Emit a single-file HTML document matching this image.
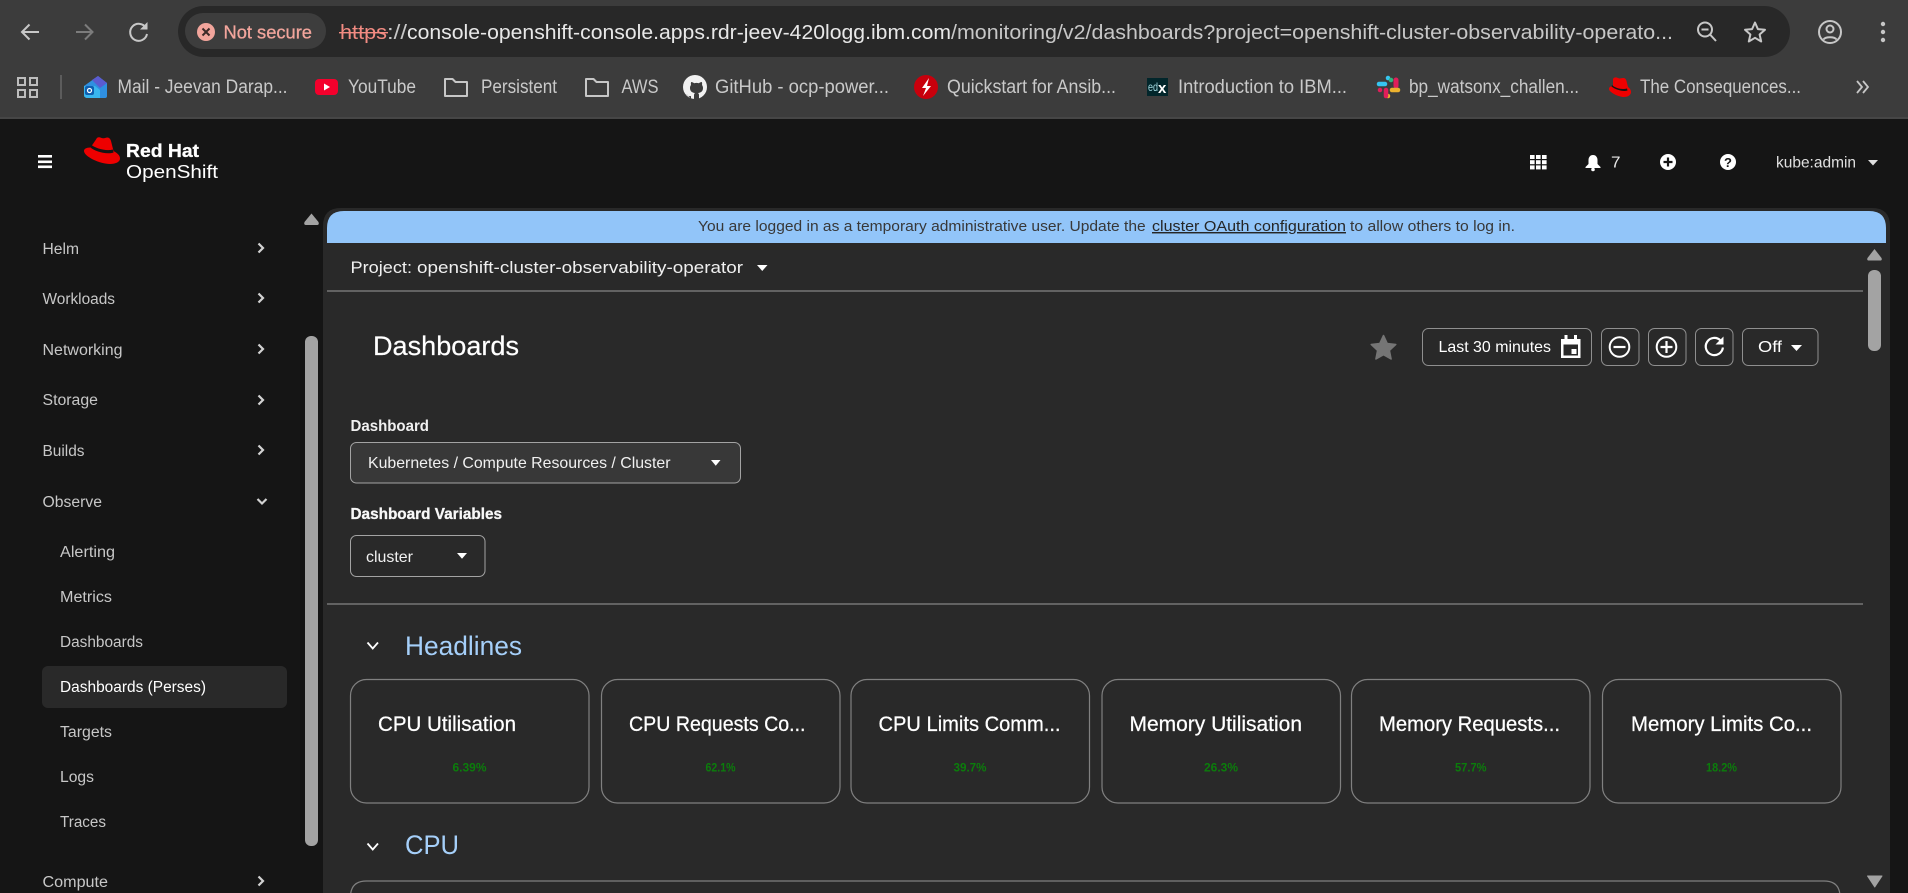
<!DOCTYPE html>
<html lang="en">
<head>
<meta charset="utf-8">
<title>Dashboards · Red Hat OpenShift</title>
<style>
html,body{margin:0;padding:0;width:1908px;height:893px;overflow:hidden;background:#151515}
svg{display:block;position:absolute;left:0;top:0}
text{font-family:"Liberation Sans",sans-serif;white-space:pre}
.bm{font-size:19px;fill:#c9c9c9}
.nav{font-size:15.500px;fill:#c7c7c7}
.ct{font-size:21px;fill:#fff;stroke:#fff;stroke-width:.25}
.cv{font-size:12px;font-weight:bold;fill:#0b7d0b;text-anchor:start}
.sec{font-size:27px;fill:#a5cff9}
.btn{fill:#292929;stroke:#8f8f8f;stroke-width:1}
.card{fill:#292929;stroke:#808080;stroke-width:1.200}
.chev{fill:none;stroke:#d2d2d2;stroke-width:2.200}
.caret{fill:#fff}
</style>
</head>
<body>
<svg width="1908" height="893" viewBox="0 0 1908 893" xmlns="http://www.w3.org/2000/svg">
  <!-- browser chrome -->
  <rect width="1908" height="118" fill="#3c3c3c"/>
  <rect y="117" width="1908" height="2" fill="#464646"/>
  <rect x="0" y="119" width="1908" height="774" fill="#151515"/>

  <path d="M39 32H22M29.500 24.500 22 32l7.500 7.500" fill="none" stroke="#c7c7c7" stroke-width="2"/>
  <path d="M76 32H92M85 24.500 92.500 32 85 39.500" fill="none" stroke="#7c7c7c" stroke-width="2"/>
  <path d="M146 28a8.500 8.500 0 1 0 1 6" fill="none" stroke="#c7c7c7" stroke-width="2"/>
  <path d="M147.500 22v7.500H140z" fill="#c7c7c7"/>

  <rect x="178" y="6" width="1612" height="51" rx="25.500" fill="#282828"/>
  <rect x="185" y="13" width="141" height="36" rx="18" fill="#3d3d3d"/>
  <circle cx="206" cy="32" r="9" fill="#f2a59c"/>
  <path d="M202.500 28.500 209.500 35.500M209.500 28.500 202.500 35.500" stroke="#3d2a28" stroke-width="2"/>
  <text x="223.500" y="38.500" font-size="18.500" fill="#f2a59c" stroke="#f2a59c" stroke-width=".3" textLength="88.500" lengthAdjust="spacingAndGlyphs">Not secure</text>

  <text x="340" y="39" font-size="20.500" fill="#f28b82" textLength="47" lengthAdjust="spacingAndGlyphs">https</text>
  <rect x="339" y="32" width="49" height="1.400" fill="#f28b82"/>
  <text x="387" y="39" font-size="20.500" fill="#c7c7c7" textLength="20" lengthAdjust="spacingAndGlyphs">://</text>
  <text x="407" y="39" font-size="20.500" fill="#e8e8e8" textLength="544" lengthAdjust="spacingAndGlyphs">console-openshift-console.apps.rdr-jeev-420logg.ibm.com</text>
  <text x="951" y="39" font-size="20.500" fill="#c7c7c7" textLength="722" lengthAdjust="spacingAndGlyphs">/monitoring/v2/dashboards?project=openshift-cluster-observability-operato...</text>

  <circle cx="1705" cy="29.500" r="7" fill="none" stroke="#c7c7c7" stroke-width="2"/>
  <path d="M1710 34.500 1716 41M1701.500 29.500h7" stroke="#c7c7c7" stroke-width="2" fill="none"/>
  <path d="M1755 22.500l2.900 6.600 7.100.7-5.400 4.700 1.600 7-6.200-3.700-6.200 3.700 1.600-7-5.400-4.700 7.100-.7z" fill="none" stroke="#c7c7c7" stroke-width="2" stroke-linejoin="round"/>
  <circle cx="1830" cy="32" r="11" fill="none" stroke="#c7c7c7" stroke-width="2"/>
  <circle cx="1830" cy="29" r="3.500" fill="none" stroke="#c7c7c7" stroke-width="2"/>
  <path d="M1823.500 39.500c2-3 11-3 13 0" fill="none" stroke="#c7c7c7" stroke-width="2"/>
  <circle cx="1883" cy="24" r="2.200" fill="#c7c7c7"/><circle cx="1883" cy="32" r="2.200" fill="#c7c7c7"/><circle cx="1883" cy="40" r="2.200" fill="#c7c7c7"/>

  <!-- bookmarks -->
  <g fill="none" stroke="#bdbdbd" stroke-width="2">
    <rect x="18" y="78" width="7" height="7"/><rect x="30" y="78" width="7" height="7"/>
    <rect x="18" y="90" width="7" height="7"/><rect x="30" y="90" width="7" height="7"/>
  </g>
  <rect x="60" y="75" width="2" height="24" fill="#5c5c5c"/>

  <path d="M84 86 98 76l9 7v13q0 2-2 2H88q-4 0-4-3z" fill="#2f8fe0"/>
  <path d="M92 80 98 76l9 7-7 5z" fill="#5b5bd0"/>
  <path d="M84 86 95 86 100 90v8H88q-4 0-4-3z" fill="#39b6ee"/>
  <rect x="85" y="86" width="9" height="9" rx="2" fill="#0e5fb0"/><circle cx="89.500" cy="90.500" r="2" fill="none" stroke="#fff" stroke-width="1.200"/>
  <text x="117.500" y="93" class="bm" textLength="170" lengthAdjust="spacingAndGlyphs">Mail - Jeevan Darap...</text>

  <rect x="315" y="79" width="23" height="16" rx="4" fill="#f4002c"/><path d="M324 83.500v7l6-3.500z" fill="#fff"/>
  <text x="348" y="93" class="bm" textLength="68" lengthAdjust="spacingAndGlyphs">YouTube</text>

  <path d="M445 79h7.500l3 3H467v14h-22z" fill="none" stroke="#c7c7c7" stroke-width="2" stroke-linejoin="round"/>
  <text x="481" y="93" class="bm" textLength="76" lengthAdjust="spacingAndGlyphs">Persistent</text>
  <path d="M586 79h7.500l3 3H608v14h-22z" fill="none" stroke="#c7c7c7" stroke-width="2" stroke-linejoin="round"/>
  <text x="621.500" y="93" class="bm" textLength="37" lengthAdjust="spacingAndGlyphs">AWS</text>

  <circle cx="695" cy="87" r="12" fill="#f2f2f2"/>
  <path d="M691 99v-3c-3 .6-4-1-4.500-2M699 99v-4c0-1-.5-1.500-1-2 3-.3 5-1.800 5-5 0-1.200-.4-2.200-1-3 .2-1 .2-2-.2-3-1 0-2 .5-3 1.200a9 9 0 0 0-4.600 0c-1-.7-2-1.200-3-1.200-.4 1-.4 2-.2 3-.7.800-1 1.800-1 3 0 3.200 2 4.700 5 5-.5.500-1 1-1 2v4z" fill="#3c3c3c"/>
  <text x="715" y="93" class="bm" textLength="174" lengthAdjust="spacingAndGlyphs">GitHub - ocp-power...</text>

  <circle cx="926" cy="87" r="12" fill="#c8000c"/><path d="M929 78l-7 10h4l-3 8 8-10h-4z" fill="#fff"/>
  <text x="947" y="93" class="bm" textLength="169" lengthAdjust="spacingAndGlyphs">Quickstart for Ansib...</text>

  <rect x="1147" y="78" width="21" height="18" fill="#02262b"/>
  <text x="1148" y="91" font-size="12" fill="#a0d8e0" textLength="10" lengthAdjust="spacingAndGlyphs">ed</text>
  <text x="1158" y="93" font-size="15" font-weight="bold" fill="#fff">x</text>
  <text x="1178" y="93" class="bm" textLength="169" lengthAdjust="spacingAndGlyphs">Introduction to IBM...</text>

  <g stroke-width="4.500" stroke-linecap="round" fill="none">
    <path d="M1379 84h6" stroke="#36c5f0"/><path d="M1388 78h0" stroke="#36c5f0"/>
    <path d="M1396 80v6" stroke="#e01e5a" stroke-width="5"/><path d="M1391 80h0" stroke="#2eb67d"/>
    <path d="M1392 90h6" stroke="#ecb22e"/><path d="M1388 96h0" stroke="#ecb22e"/>
    <path d="M1386 90v6" stroke="#e01e5a"/><path d="M1380 90h0" stroke="#e01e5a"/>
  </g>
  <text x="1409" y="93" class="bm" textLength="170" lengthAdjust="spacingAndGlyphs">bp_watsonx_challen...</text>

  <path d="M1613 79c1-2 3-2 5-1 2 1 3 0 5 0 2 0 3 1 3.500 3l1.500 6c2 1.500 3 3 3 5 0 3-3 5-7 5-6 0-15-5-15-8 0-2 2-3 4-3z" fill="#e00"/>
  <path d="M1612 85c3 3 10 5 15 3.500l.5 2c-5 1.500-12-1-16-4z" fill="#151515"/>
  <text x="1640" y="93" class="bm" textLength="161" lengthAdjust="spacingAndGlyphs">The Consequences...</text>
  <path d="M1857 81l5 6-5 6M1863 81l5 6-5 6" fill="none" stroke="#c7c7c7" stroke-width="1.800"/>

  <!-- masthead -->
  <rect x="38" y="155" width="14" height="2.600" fill="#fff"/><rect x="38" y="160.500" width="14" height="2.600" fill="#fff"/><rect x="38" y="165.500" width="14" height="2.600" fill="#fff"/>
  <path d="M96 139.500C97 137 99 136.800 101 137.800 103 138.800 105 138 107 137.500 109 137.300 110.500 139 111 141L113.500 151C117 153 120 155 120 158.500 120 162 115.500 164 110 164 100 164 84 156.500 84 151 84 149 86 147.500 90.500 147.500Z" fill="#e00"/>
  <path d="M91.500 145C95 148 106 151.500 112.800 149.500L113.600 152.500C106 155 94 151 90.500 147.500Z" fill="#151515"/>
  <text x="126" y="157" font-size="18" font-weight="bold" fill="#fff" stroke="#fff" stroke-width=".3" textLength="73" lengthAdjust="spacingAndGlyphs">Red Hat</text>
  <text x="126" y="178" font-size="18.500" fill="#fff" textLength="92" lengthAdjust="spacingAndGlyphs">OpenShift</text>

  <g fill="#fff">
    <rect x="1530" y="155" width="4.600" height="4"/><rect x="1536" y="155" width="4.600" height="4"/><rect x="1542" y="155" width="4.600" height="4"/>
    <rect x="1530" y="160.200" width="4.600" height="4"/><rect x="1536" y="160.200" width="4.600" height="4"/><rect x="1542" y="160.200" width="4.600" height="4"/>
    <rect x="1530" y="165.400" width="4.600" height="4"/><rect x="1536" y="165.400" width="4.600" height="4"/><rect x="1542" y="165.400" width="4.600" height="4"/>
  </g>
  <path d="M1593 155c-3 0-4.500 2.500-4.500 5v4l-3 3v1h15v-1l-3-3v-4c0-2.500-1.500-5-4.500-5z" fill="#fff"/><circle cx="1593" cy="169.500" r="1.800" fill="#fff"/>
  <text x="1611" y="167.500" font-size="15.500" fill="#e6e6e6" textLength="9.500" lengthAdjust="spacingAndGlyphs">7</text>
  <circle cx="1668" cy="162" r="8" fill="#fff"/><path d="M1668 157.500v9M1663.500 162h9" stroke="#151515" stroke-width="2.200"/>
  <circle cx="1728" cy="162" r="8" fill="#fff"/>
  <text x="1728" y="167" font-size="13" font-weight="bold" fill="#151515" text-anchor="middle">?</text>
  <text x="1776" y="167.500" font-size="16" fill="#e0e0e0" textLength="80" lengthAdjust="spacingAndGlyphs">kube:admin</text>
  <path d="M1868 160h10l-5 5.500z" fill="#e0e0e0"/>

  <!-- sidebar -->
  <path d="M311.500 213.500 304.500 222q-1 3 1.500 3h11q2.500 0 1.500-3z" fill="#a3a3a3"/>
  <rect x="305" y="336" width="13" height="510" rx="6" fill="#a3a3a3"/>
  <rect x="42" y="666" width="245" height="42" rx="6" fill="#292929"/>

  <text x="42.500" y="254" class="nav" textLength="36.500" lengthAdjust="spacingAndGlyphs">Helm</text>
  <text x="42.500" y="304" class="nav" textLength="72.500" lengthAdjust="spacingAndGlyphs">Workloads</text>
  <text x="42.500" y="355" class="nav" textLength="80" lengthAdjust="spacingAndGlyphs">Networking</text>
  <text x="42.500" y="405" class="nav" textLength="55.500" lengthAdjust="spacingAndGlyphs">Storage</text>
  <text x="42.500" y="456" class="nav" textLength="42" lengthAdjust="spacingAndGlyphs">Builds</text>
  <text x="42.500" y="507" class="nav" textLength="59.500" lengthAdjust="spacingAndGlyphs">Observe</text>
  <text x="60" y="557" class="nav" textLength="55" lengthAdjust="spacingAndGlyphs">Alerting</text>
  <text x="60" y="602" class="nav" textLength="52" lengthAdjust="spacingAndGlyphs">Metrics</text>
  <text x="60" y="647" class="nav" textLength="83" lengthAdjust="spacingAndGlyphs">Dashboards</text>
  <text x="60" y="692" class="nav" style="fill:#fff" textLength="146" lengthAdjust="spacingAndGlyphs">Dashboards (Perses)</text>
  <text x="60" y="737" class="nav" textLength="52" lengthAdjust="spacingAndGlyphs">Targets</text>
  <text x="60" y="782" class="nav" textLength="34" lengthAdjust="spacingAndGlyphs">Logs</text>
  <text x="60" y="827" class="nav" textLength="46" lengthAdjust="spacingAndGlyphs">Traces</text>
  <text x="42.500" y="887" class="nav" textLength="65.500" lengthAdjust="spacingAndGlyphs">Compute</text>

  <g class="chev">
    <path d="M258.500 243.500 263 248l-4.500 4.500"/>
    <path d="M258.500 293.500 263 298l-4.500 4.500"/>
    <path d="M258.500 344.500 263 349l-4.500 4.500"/>
    <path d="M258.500 395.500 263 400l-4.500 4.500"/>
    <path d="M258.500 445.500 263 450l-4.500 4.500"/>
    <path d="M257.500 499 262 503.500l4.500-4.500"/>
    <path d="M258.500 876.500 263 881l-4.500 4.500"/>
  </g>

  <!-- main panel -->
  <path d="M323 893V226q0-18 18-18H1872q18 0 18 18V893z" fill="#292929"/>
  <path d="M327 243V228q0-17 17-17H1869q17 0 17 17V243z" fill="#92c5f9"/>
  <text x="698" y="231" font-size="14.500" fill="#383838" textLength="452" lengthAdjust="spacingAndGlyphs">You are logged in as a temporary administrative user. Update the </text>
  <text x="1152" y="231" font-size="14.500" fill="#262626" text-decoration="underline" textLength="194" lengthAdjust="spacingAndGlyphs">cluster OAuth configuration</text>
  <text x="1350" y="231" font-size="14.500" fill="#383838" textLength="165" lengthAdjust="spacingAndGlyphs">to allow others to log in.</text>

  <text x="350.500" y="273" font-size="17" fill="#f0f0f0" textLength="61.500" lengthAdjust="spacingAndGlyphs">Project:</text>
  <text x="417" y="273" font-size="17" fill="#f0f0f0" textLength="326" lengthAdjust="spacingAndGlyphs">openshift-cluster-observability-operator</text>
  <path d="M757 265h10.500l-5.250 6z" class="caret"/>
  <rect x="327" y="290.500" width="1536" height="1" fill="#9a9a9a"/>

  <text x="373" y="355" font-size="27" fill="#fff" stroke="#fff" stroke-width=".2" textLength="146" lengthAdjust="spacingAndGlyphs">Dashboards</text>

  <path d="M1383.500 335.500l3.700 8 8.600 1-6.400 5.900 1.700 8.600-7.600-4.300-7.600 4.300 1.700-8.600-6.400-5.900 8.600-1z" fill="#757575" stroke="#757575" stroke-width="1.500" stroke-linejoin="round"/>

  <rect x="1422.500" y="328.500" width="169" height="37" rx="6" class="btn"/>
  <text x="1438.500" y="352" font-size="16" fill="#fff" textLength="112.500" lengthAdjust="spacingAndGlyphs">Last 30 minutes</text>
  <path d="M1561 339h19.500v19H1561z" fill="#fff"/>
  <rect x="1563.500" y="344.500" width="14.500" height="11" fill="#292929"/>
  <rect x="1571.500" y="349" width="5" height="5" fill="#fff"/>
  <rect x="1564.500" y="335" width="3" height="5" fill="#fff"/><rect x="1574" y="335" width="3" height="5" fill="#fff"/>

  <rect x="1601.500" y="328.500" width="37.500" height="37" rx="6" class="btn"/>
  <circle cx="1619.500" cy="347" r="9.800" fill="none" stroke="#fff" stroke-width="2"/><path d="M1613.500 347h12" stroke="#fff" stroke-width="2.200"/>
  <rect x="1648.500" y="328.500" width="37.500" height="37" rx="6" class="btn"/>
  <circle cx="1666.500" cy="347" r="9.800" fill="none" stroke="#fff" stroke-width="2"/><path d="M1660.500 347h12M1666.500 341v12" stroke="#fff" stroke-width="2.200"/>
  <rect x="1695.500" y="328.500" width="37.500" height="37" rx="6" class="btn"/>
  <path d="M1720.500 340.500a8.600 8.600 0 1 0 2.400 7" fill="none" stroke="#fff" stroke-width="2.200"/><path d="M1723.500 336.500v8h-8z" fill="#fff"/>
  <rect x="1742.500" y="328.500" width="75.500" height="37" rx="6" class="btn"/>
  <text x="1758" y="352" font-size="16" fill="#fff" textLength="24" lengthAdjust="spacingAndGlyphs">Off</text>
  <path d="M1791 345h11l-5.500 6z" class="caret"/>

  <text x="350.500" y="431" font-size="15.500" font-weight="bold" fill="#f0f0f0" textLength="78.500" lengthAdjust="spacingAndGlyphs">Dashboard</text>
  <rect x="350.500" y="442.500" width="390" height="40.500" rx="6" fill="#383838" stroke="#a3a3a3"/>
  <text x="368" y="468" font-size="16" fill="#f0f0f0" textLength="302.500" lengthAdjust="spacingAndGlyphs">Kubernetes / Compute Resources / Cluster</text>
  <path d="M711 460h9.500l-4.750 5.800z" class="caret"/>

  <text x="350.500" y="519" font-size="15.500" font-weight="bold" fill="#f8f8f8" stroke="#f8f8f8" stroke-width=".3" textLength="151.500" lengthAdjust="spacingAndGlyphs">Dashboard Variables</text>
  <rect x="350.500" y="535.500" width="134.500" height="41" rx="6" class="btn" style="stroke:#a3a3a3"/>
  <text x="366" y="562" font-size="16" fill="#f0f0f0" textLength="47" lengthAdjust="spacingAndGlyphs">cluster</text>
  <path d="M457 553h10l-5 5.800z" class="caret"/>

  <rect x="327" y="603.500" width="1536" height="1" fill="#9a9a9a"/>

  <path d="M367.500 642.500l5.250 6 5.250-6" fill="none" stroke="#fff" stroke-width="1.800"/>
  <text x="405" y="655" class="sec" textLength="117" lengthAdjust="spacingAndGlyphs">Headlines</text>

  <rect x="350.500" y="679.500" width="238.500" height="123.500" rx="16" class="card"/>
  <rect x="601.500" y="679.500" width="238.500" height="123.500" rx="16" class="card"/>
  <rect x="851" y="679.500" width="238.500" height="123.500" rx="16" class="card"/>
  <rect x="1102" y="679.500" width="238.500" height="123.500" rx="16" class="card"/>
  <rect x="1351.500" y="679.500" width="238.500" height="123.500" rx="16" class="card"/>
  <rect x="1602.500" y="679.500" width="238.500" height="123.500" rx="16" class="card"/>

  <text x="378" y="731" class="ct" textLength="138" lengthAdjust="spacingAndGlyphs">CPU Utilisation</text>
  <text x="629" y="731" class="ct" textLength="176.500" lengthAdjust="spacingAndGlyphs">CPU Requests Co...</text>
  <text x="878.500" y="731" class="ct" textLength="182" lengthAdjust="spacingAndGlyphs">CPU Limits Comm...</text>
  <text x="1129.500" y="731" class="ct" textLength="172.500" lengthAdjust="spacingAndGlyphs">Memory Utilisation</text>
  <text x="1379" y="731" class="ct" textLength="181" lengthAdjust="spacingAndGlyphs">Memory Requests...</text>
  <text x="1631" y="731" class="ct" textLength="181" lengthAdjust="spacingAndGlyphs">Memory Limits Co...</text>

  <text x="452.500" y="771.500" class="cv" textLength="34" lengthAdjust="spacingAndGlyphs">6.39%</text>
  <text x="705.500" y="771.500" class="cv" textLength="30" lengthAdjust="spacingAndGlyphs">62.1%</text>
  <text x="953.500" y="771.500" class="cv" textLength="33" lengthAdjust="spacingAndGlyphs">39.7%</text>
  <text x="1204" y="771.500" class="cv" textLength="34" lengthAdjust="spacingAndGlyphs">26.3%</text>
  <text x="1455" y="771.500" class="cv" textLength="31.500" lengthAdjust="spacingAndGlyphs">57.7%</text>
  <text x="1706" y="771.500" class="cv" textLength="31" lengthAdjust="spacingAndGlyphs">18.2%</text>

  <path d="M367.500 843.500l5.250 6 5.250-6" fill="none" stroke="#fff" stroke-width="1.800"/>
  <text x="405" y="854" class="sec" textLength="54" lengthAdjust="spacingAndGlyphs">CPU</text>

  <path d="M350.500 900V897q0-16 16-16H1824q16 0 16 16V900" fill="#292929" stroke="#808080" stroke-width="1.200"/>

  <!-- content scrollbar -->
  <path d="M1874.500 249 1867.500 258q-1 2.500 1.500 2.500h11q2.500 0 1.500-2.500z" fill="#a3a3a3"/>
  <rect x="1868" y="270" width="13" height="81" rx="6" fill="#a3a3a3"/>
  <path d="M1867.500 876h14.500l-7.250 11z" fill="#a3a3a3" stroke="#a3a3a3" stroke-width="1" stroke-linejoin="round"/>
</svg>
</body>
</html>
